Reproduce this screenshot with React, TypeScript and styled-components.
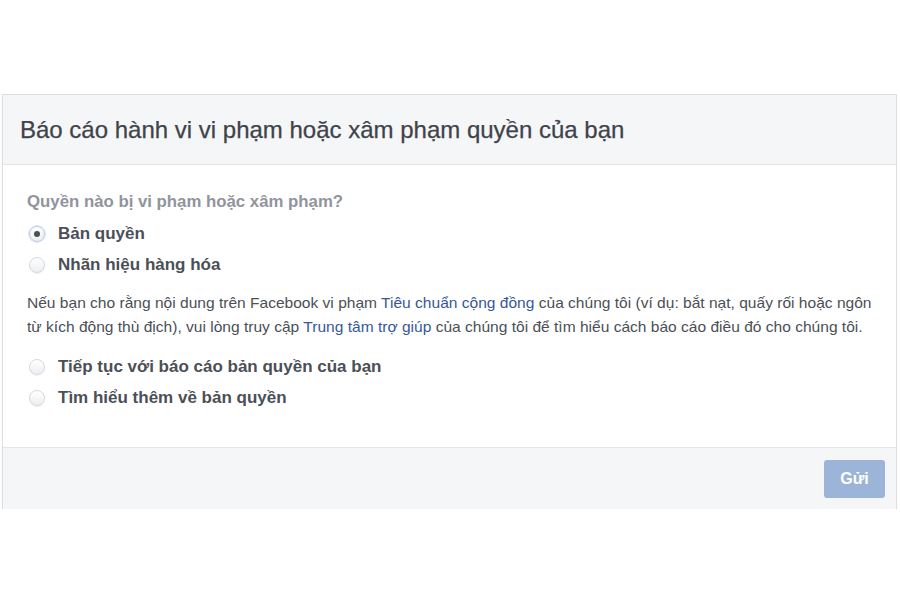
import { useState } from "react";
import styled, { createGlobalStyle } from "styled-components";

const GlobalStyle = createGlobalStyle`
  body {
    margin: 0;
    background: #fff;
    font-family: "Liberation Sans", Arial, sans-serif;
  }
`;

const Dialog = styled.div`
  margin: 94px 0 0 2px;
  width: 893px;
  border: 1px solid #dddfe2;
  border-bottom: none;
  box-shadow: 0 1px 2px rgba(0, 0, 0, 0.06);
`;

const Header = styled.div`
  height: 69px;
  display: flex;
  align-items: center;
  padding: 0 17px;
  background: #f5f6f7;
  border-bottom: 1px solid #e5e5e5;
`;

const Title = styled.h2`
  margin: 0;
  font-size: 24px;
  font-weight: normal;
  color: #3f434a;
  -webkit-text-stroke: 0.25px #3f434a;
`;

const Body = styled.div`
  height: 282px;
  padding: 27px 16px 0 24px;
  box-sizing: border-box;
`;

const Question = styled.div`
  font-size: 16.8px;
  font-weight: bold;
  line-height: 20px;
  color: #90949c;
`;

const Options = styled.div<{ $top: number }>`
  display: flex;
  flex-direction: column;
  margin-top: ${(p) => p.$top}px;
`;

const Option = styled.label`
  display: flex;
  align-items: center;
  gap: 13px;
  height: 31px;
  padding-left: 2px;
  font-size: 17px;
  font-weight: bold;
  color: #4b4f56;
  cursor: pointer;
`;

const Circle = styled.span<{ $checked: boolean }>`
  width: 16px;
  height: 16px;
  border-radius: 50%;
  box-sizing: border-box;
  border: 1px solid ${(p) => (p.$checked ? "#bfcbe4" : "#d6d8dc")};
  background: linear-gradient(#fff, #eceef1);
  box-shadow: ${(p) =>
    p.$checked ? "0 0 0 1px #dfe6f3" : "0 1px 1px rgba(0,0,0,0.06)"};
  display: flex;
  align-items: center;
  justify-content: center;

  &::after {
    content: "";
    width: 6px;
    height: 6px;
    border-radius: 50%;
    background: #4b4f56;
    display: ${(p) => (p.$checked ? "block" : "none")};
  }
`;

const Note = styled.p`
  margin: 11px 0 0;
  font-size: 15.55px;
  line-height: 24px;
  color: #4b4f56;
`;

const Link = styled.a`
  color: #365899;
  text-decoration: none;
`;

const Footer = styled.div`
  height: 62px;
  display: flex;
  align-items: center;
  justify-content: flex-end;
  padding: 0 11px;
  background: #f5f6f7;
  border-top: 1px solid #e5e5e5;
  box-sizing: border-box;
`;

const SendButton = styled.button`
  width: 61px;
  height: 38px;
  border: none;
  border-radius: 3px;
  background: #9cb4d8;
  color: #fff;
  font-family: inherit;
  font-size: 16px;
  font-weight: bold;
`;

const App = () => {
  const [right, setRight] = useState("copyright");
  const [next, setNext] = useState("");

  return (
    <>
      <GlobalStyle />
      <Dialog>
        <Header>
          <Title>Báo cáo hành vi vi phạm hoặc xâm phạm quyền của bạn</Title>
        </Header>
        <Body>
          <Question>Quyền nào bị vi phạm hoặc xâm phạm?</Question>
          <Options $top={6}>
            <Option onClick={() => setRight("copyright")}>
              <Circle $checked={right === "copyright"} />
              Bản quyền
            </Option>
            <Option onClick={() => setRight("trademark")}>
              <Circle $checked={right === "trademark"} />
              Nhãn hiệu hàng hóa
            </Option>
          </Options>
          <Note>
            Nếu bạn cho rằng nội dung trên Facebook vi phạm{" "}
            <Link href="#">Tiêu chuẩn cộng đồng</Link> của chúng tôi (ví dụ: bắt
            nạt, quấy rối hoặc ngôn từ kích động thù địch), vui lòng truy cập{" "}
            <Link href="#">Trung tâm trợ giúp</Link> của chúng tôi để tìm hiểu
            cách báo cáo điều đó cho chúng tôi.
          </Note>
          <Options $top={12}>
            <Option onClick={() => setNext("continue")}>
              <Circle $checked={next === "continue"} />
              Tiếp tục với báo cáo bản quyền của bạn
            </Option>
            <Option onClick={() => setNext("learn")}>
              <Circle $checked={next === "learn"} />
              Tìm hiểu thêm về bản quyền
            </Option>
          </Options>
        </Body>
        <Footer>
          <SendButton>Gửi</SendButton>
        </Footer>
      </Dialog>
    </>
  );
};

export default App;
